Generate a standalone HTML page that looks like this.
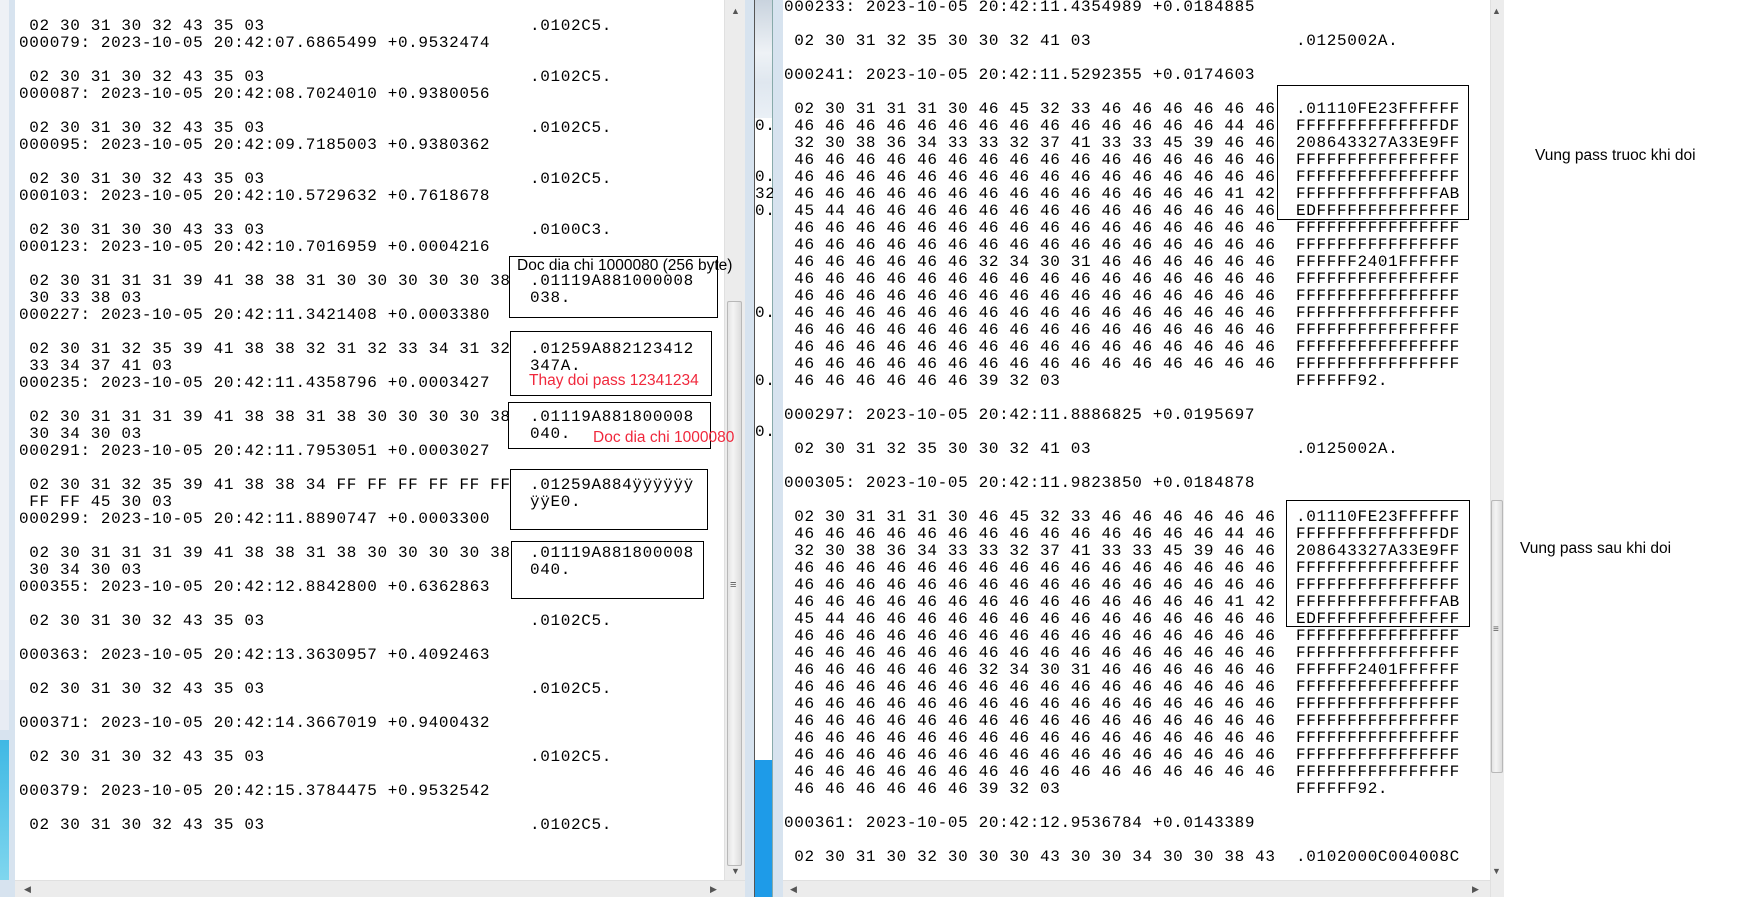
<!DOCTYPE html>
<html><head><meta charset="utf-8">
<style>
*{margin:0;padding:0;box-sizing:border-box}
body{width:1756px;height:897px;overflow:hidden;background:#fff;position:relative;font-family:"Liberation Sans",sans-serif}
.abs{position:absolute}
pre{position:absolute;font-family:"Liberation Mono",monospace;font-size:16px;letter-spacing:0.64px;line-height:17px;color:#000;white-space:pre;margin:0}
.box{position:absolute;border:1.5px solid #000}
.note{position:absolute;font-size:15.5px;line-height:17px;white-space:nowrap;z-index:10}
.vsb{position:absolute;background:#ececec;border-left:1px solid #e0e0e0}
.thumb{position:absolute;left:2px;right:2px;background:linear-gradient(90deg,#e4e4e4,#f4f4f4 40%,#dcdcdc);border:1px solid #b8b8b8;border-radius:2px}
.hsb{position:absolute;background:#ececec;border-top:1px solid #e0e0e0}
.arr{position:absolute;font-size:9px;color:#555;line-height:10px}
</style></head><body>
<!-- left edge desktop -->
<div class="abs" style="left:0;top:0;width:15px;height:897px;background:#d7e3ef"></div>
<div class="abs" style="left:0;top:0;width:9px;height:680px;background:#eef1f6"></div>
<div class="abs" style="left:0;top:680px;width:9px;height:50px;background:#e8ecf4"></div>
<div class="abs" style="left:0;top:740px;width:9px;height:140px;background:linear-gradient(180deg,#3fb8e4,#7fd6ee)"></div>

<!-- middle strip -->
<div class="abs" style="left:745px;top:0;width:38px;height:897px;background:#d7e3ef"></div>
<div class="abs" style="left:754px;top:0;width:19px;height:897px;background:#fff;border-left:1px solid #555;border-right:1px solid #8aa"></div>
<div class="abs" style="left:755px;top:0;width:17px;height:118px;background:linear-gradient(180deg,#c9d3de,#eef2f6 45%,#dfe7ef 70%,#eaf0f6)"></div>
<div class="abs" style="left:755px;top:760px;width:17px;height:137px;background:#1e9be8"></div>
<pre style="left:755px;top:118px;width:18px;overflow:hidden;color:#000">0.


0.
32
0.





0.



0.


0.</pre>

<!-- LEFT PANE -->
<pre style="left:19px;top:17.5px"> 02 30 31 30 32 43 35 03
000079: 2023-10-05 20:42:07.6865499 +0.9532474

 02 30 31 30 32 43 35 03
000087: 2023-10-05 20:42:08.7024010 +0.9380056

 02 30 31 30 32 43 35 03
000095: 2023-10-05 20:42:09.7185003 +0.9380362

 02 30 31 30 32 43 35 03
000103: 2023-10-05 20:42:10.5729632 +0.7618678

 02 30 31 30 30 43 33 03
000123: 2023-10-05 20:42:10.7016959 +0.0004216

 02 30 31 31 31 39 41 38 38 31 30 30 30 30 30 38
 30 33 38 03
000227: 2023-10-05 20:42:11.3421408 +0.0003380

 02 30 31 32 35 39 41 38 38 32 31 32 33 34 31 32
 33 34 37 41 03
000235: 2023-10-05 20:42:11.4358796 +0.0003427

 02 30 31 31 31 39 41 38 38 31 38 30 30 30 30 38
 30 34 30 03
000291: 2023-10-05 20:42:11.7953051 +0.0003027

 02 30 31 32 35 39 41 38 38 34 FF FF FF FF FF FF
 FF FF 45 30 03
000299: 2023-10-05 20:42:11.8890747 +0.0003300

 02 30 31 31 31 39 41 38 38 31 38 30 30 30 30 38
 30 34 30 03
000355: 2023-10-05 20:42:12.8842800 +0.6362863

 02 30 31 30 32 43 35 03

000363: 2023-10-05 20:42:13.3630957 +0.4092463

 02 30 31 30 32 43 35 03

000371: 2023-10-05 20:42:14.3667019 +0.9400432

 02 30 31 30 32 43 35 03

000379: 2023-10-05 20:42:15.3784475 +0.9532542

 02 30 31 30 32 43 35 03</pre>
<pre style="left:530px;top:17.5px">.0102C5.


.0102C5.


.0102C5.


.0102C5.


.0100C3.


.01119A881000008
038.


.01259A882123412
347A.


.01119A881800008
040.


.01259A884ÿÿÿÿÿÿ
ÿÿE0.


.01119A881800008
040.


.0102C5.



.0102C5.



.0102C5.



.0102C5.</pre>

<div class="box" style="left:509px;top:256px;width:209px;height:62px"></div>
<div class="box" style="left:510px;top:331px;width:202px;height:65px"></div>
<div class="box" style="left:508px;top:402px;width:203px;height:47px"></div>
<div class="box" style="left:510px;top:469px;width:198px;height:61px"></div>
<div class="box" style="left:511px;top:541px;width:193px;height:58px"></div>

<!-- left scrollbars -->
<div class="vsb" style="left:724px;top:0;width:21px;height:880px"></div>
<div class="arr" style="left:731px;top:6px">▲</div>
<div class="thumb" style="left:727px;right:auto;width:15px;top:301px;height:565px"></div>
<div class="arr" style="left:730px;top:580px;font-size:11px">≡</div>
<div class="arr" style="left:731px;top:866px">▼</div>
<div class="hsb" style="left:15px;top:880px;width:730px;height:17px"></div>
<div class="arr" style="left:24px;top:884px">◀</div>
<div class="arr" style="left:710px;top:884px">▶</div>

<div class="note" style="left:517px;top:257px">Doc dia chi 1000080 (256 byte)</div>
<div class="note" style="left:529px;top:372px;color:#f0283c">Thay doi pass 12341234</div>
<div class="note" style="left:593px;top:429px;color:#f0283c">Doc dia chi 1000080</div>

<!-- RIGHT PANE -->
<pre style="left:784px;top:-1.2px">000233: 2023-10-05 20:42:11.4354989 +0.0184885

 02 30 31 32 35 30 30 32 41 03

000241: 2023-10-05 20:42:11.5292355 +0.0174603

 02 30 31 31 31 30 46 45 32 33 46 46 46 46 46 46
 46 46 46 46 46 46 46 46 46 46 46 46 46 46 44 46
 32 30 38 36 34 33 33 32 37 41 33 33 45 39 46 46
 46 46 46 46 46 46 46 46 46 46 46 46 46 46 46 46
 46 46 46 46 46 46 46 46 46 46 46 46 46 46 46 46
 46 46 46 46 46 46 46 46 46 46 46 46 46 46 41 42
 45 44 46 46 46 46 46 46 46 46 46 46 46 46 46 46
 46 46 46 46 46 46 46 46 46 46 46 46 46 46 46 46
 46 46 46 46 46 46 46 46 46 46 46 46 46 46 46 46
 46 46 46 46 46 46 32 34 30 31 46 46 46 46 46 46
 46 46 46 46 46 46 46 46 46 46 46 46 46 46 46 46
 46 46 46 46 46 46 46 46 46 46 46 46 46 46 46 46
 46 46 46 46 46 46 46 46 46 46 46 46 46 46 46 46
 46 46 46 46 46 46 46 46 46 46 46 46 46 46 46 46
 46 46 46 46 46 46 46 46 46 46 46 46 46 46 46 46
 46 46 46 46 46 46 46 46 46 46 46 46 46 46 46 46
 46 46 46 46 46 46 39 32 03

000297: 2023-10-05 20:42:11.8886825 +0.0195697

 02 30 31 32 35 30 30 32 41 03

000305: 2023-10-05 20:42:11.9823850 +0.0184878

 02 30 31 31 31 30 46 45 32 33 46 46 46 46 46 46
 46 46 46 46 46 46 46 46 46 46 46 46 46 46 44 46
 32 30 38 36 34 33 33 32 37 41 33 33 45 39 46 46
 46 46 46 46 46 46 46 46 46 46 46 46 46 46 46 46
 46 46 46 46 46 46 46 46 46 46 46 46 46 46 46 46
 46 46 46 46 46 46 46 46 46 46 46 46 46 46 41 42
 45 44 46 46 46 46 46 46 46 46 46 46 46 46 46 46
 46 46 46 46 46 46 46 46 46 46 46 46 46 46 46 46
 46 46 46 46 46 46 46 46 46 46 46 46 46 46 46 46
 46 46 46 46 46 46 32 34 30 31 46 46 46 46 46 46
 46 46 46 46 46 46 46 46 46 46 46 46 46 46 46 46
 46 46 46 46 46 46 46 46 46 46 46 46 46 46 46 46
 46 46 46 46 46 46 46 46 46 46 46 46 46 46 46 46
 46 46 46 46 46 46 46 46 46 46 46 46 46 46 46 46
 46 46 46 46 46 46 46 46 46 46 46 46 46 46 46 46
 46 46 46 46 46 46 46 46 46 46 46 46 46 46 46 46
 46 46 46 46 46 46 39 32 03

000361: 2023-10-05 20:42:12.9536784 +0.0143389

 02 30 31 30 32 30 30 30 43 30 30 34 30 30 38 43</pre>
<pre style="left:1296px;top:-1.2px">


.0125002A.



.01110FE23FFFFFF
FFFFFFFFFFFFFFDF
208643327A33E9FF
FFFFFFFFFFFFFFFF
FFFFFFFFFFFFFFFF
FFFFFFFFFFFFFFAB
EDFFFFFFFFFFFFFF
FFFFFFFFFFFFFFFF
FFFFFFFFFFFFFFFF
FFFFFF2401FFFFFF
FFFFFFFFFFFFFFFF
FFFFFFFFFFFFFFFF
FFFFFFFFFFFFFFFF
FFFFFFFFFFFFFFFF
FFFFFFFFFFFFFFFF
FFFFFFFFFFFFFFFF
FFFFFF92.



.0125002A.



.01110FE23FFFFFF
FFFFFFFFFFFFFFDF
208643327A33E9FF
FFFFFFFFFFFFFFFF
FFFFFFFFFFFFFFFF
FFFFFFFFFFFFFFAB
EDFFFFFFFFFFFFFF
FFFFFFFFFFFFFFFF
FFFFFFFFFFFFFFFF
FFFFFF2401FFFFFF
FFFFFFFFFFFFFFFF
FFFFFFFFFFFFFFFF
FFFFFFFFFFFFFFFF
FFFFFFFFFFFFFFFF
FFFFFFFFFFFFFFFF
FFFFFFFFFFFFFFFF
FFFFFF92.



.0102000C004008C</pre>
<div class="box" style="left:1277px;top:85px;width:192px;height:135px"></div>
<div class="box" style="left:1286px;top:500px;width:184px;height:127px"></div>

<!-- right scrollbars -->
<div class="vsb" style="left:1490px;top:0;width:14px;height:897px"></div>
<div class="arr" style="left:1492px;top:6px">▲</div>
<div class="thumb" style="left:1491px;right:auto;width:12px;top:500px;height:273px"></div>
<div class="arr" style="left:1493px;top:625px;font-size:10px">≡</div>
<div class="arr" style="left:1492px;top:866px">▼</div>
<div class="hsb" style="left:783px;top:880px;width:707px;height:17px"></div>
<div class="arr" style="left:790px;top:884px">◀</div>
<div class="arr" style="left:1472px;top:884px">▶</div>

<div class="note" style="left:1535px;top:147px">Vung pass truoc khi doi</div>
<div class="note" style="left:1520px;top:540px">Vung pass sau khi doi</div>
</body></html>
